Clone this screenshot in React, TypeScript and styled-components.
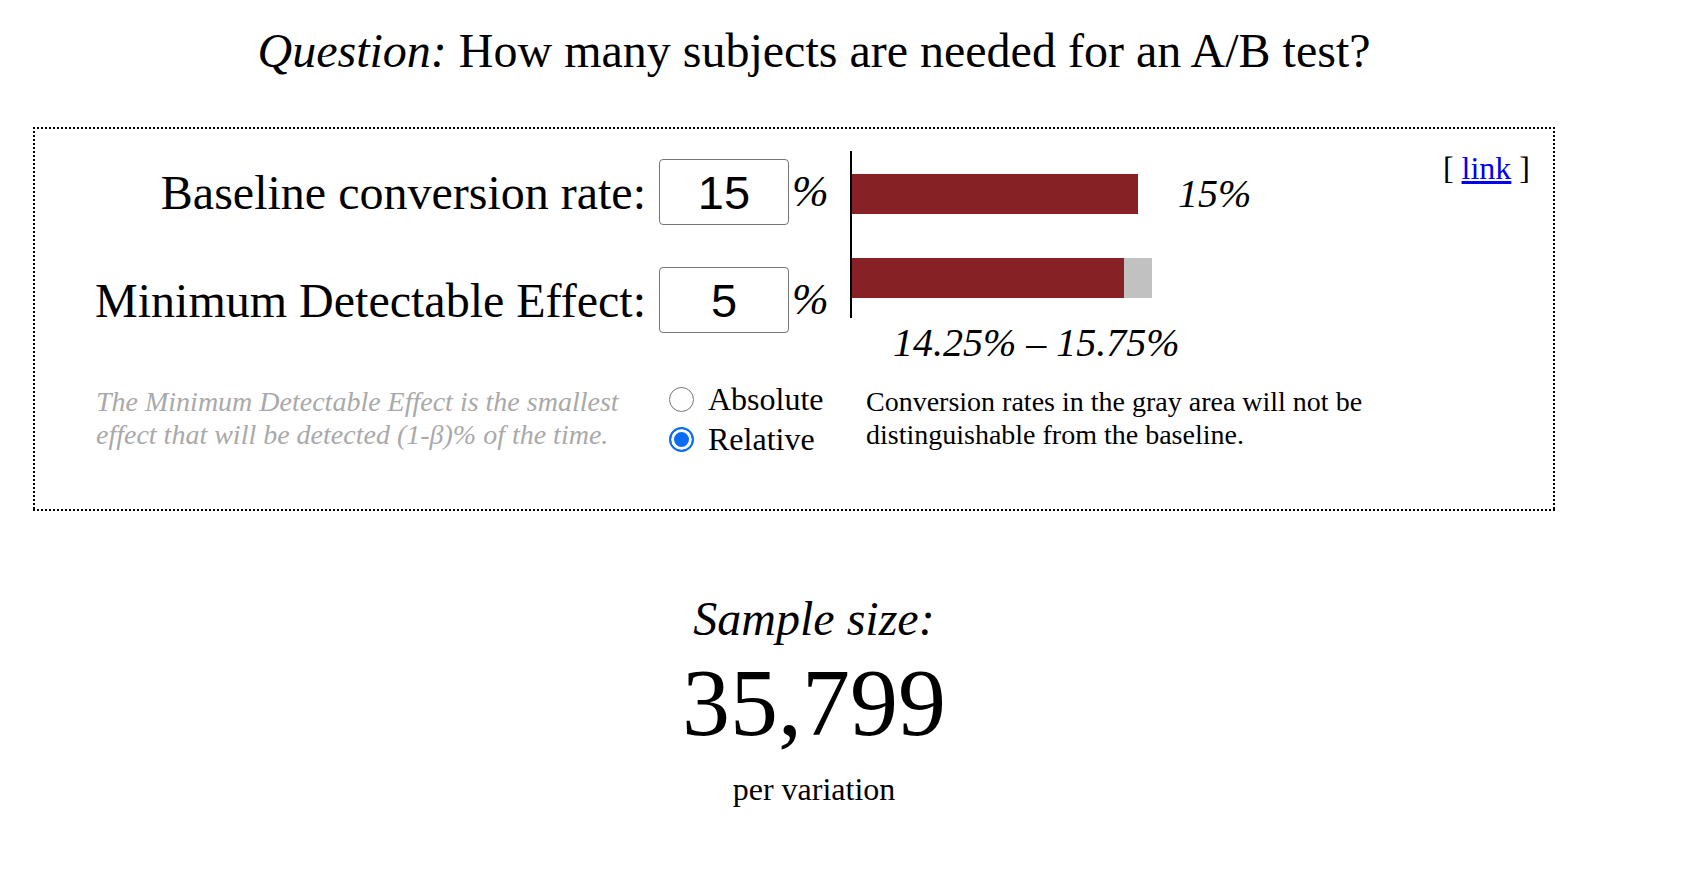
import React, { useState } from "react";
import styled, { createGlobalStyle } from "styled-components";

const GlobalStyle = createGlobalStyle`
  html, body { margin: 0; padding: 0; background: #fff; }
  body {
    font-family: "Liberation Serif", "Times New Roman", serif;
    color: #000;
  }
`;

const PX_PER_PCT = 19.2;

const Page = styled.main`
  width: 1562px;
  padding: 23px 0 0 33px;
`;

const Title = styled.h1`
  margin: 0;
  font-weight: normal;
  font-size: 48px;
  line-height: 55px;
  text-align: center;
`;

const Em = styled.em`
  font-style: italic;
`;

const Panel = styled.section`
  box-sizing: border-box;
  width: 1522px;
  margin-top: 49px;
  border: 2px solid transparent;
  background-origin: border-box;
  background-repeat: no-repeat;
  background-image:
    repeating-linear-gradient(to right, #000 0 2px, transparent 2px 4px),
    repeating-linear-gradient(to right, #000 0 2px, transparent 2px 4px),
    repeating-linear-gradient(to bottom, #000 0 2px, transparent 2px 4px),
    repeating-linear-gradient(to bottom, #000 0 2px, transparent 2px 4px);
  background-size: 100% 2px, 100% 2px, 2px 100%, 2px 100%;
  background-position: left top, left bottom, left top, right top;
  padding: 22px 23px 50px 0;
`;

const TopArea = styled.div`
  display: flex;
  align-items: flex-start;
`;

const InputGrid = styled.div`
  display: grid;
  grid-template-columns: 624px 130px 61px;
  grid-auto-rows: 66px;
  row-gap: 42px;
  align-items: center;
  padding-top: 8px;
`;

const FieldLabel = styled.label`
  font-size: 48px;
  line-height: 55px;
  text-align: right;
  padding-right: 13px;
  white-space: nowrap;
`;

const NumberInput = styled.input`
  box-sizing: border-box;
  width: 130px;
  height: 66px;
  border: 1px solid #767676;
  border-radius: 4px;
  font-family: "Liberation Sans", Arial, sans-serif;
  font-size: 47px;
  text-align: center;
  padding: 0;
  color: #000;
  background: #fff;
  outline: none;
`;

const Unit = styled.span`
  font-style: italic;
  font-size: 44px;
  line-height: 50px;
  padding-left: 3px;
`;

const Chart = styled.div`
  display: flex;
  flex-direction: column;
`;

const Axis = styled.div`
  box-sizing: border-box;
  height: 167px;
  border-left: 2px solid #000;
  padding: 23px 0 20px;
  display: flex;
  flex-direction: column;
  gap: 44px;
`;

const BarRow = styled.div`
  display: flex;
  align-items: center;
  gap: 40px;
  height: 40px;
`;

const Bar = styled.div`
  display: flex;
  height: 40px;
`;

const Segment = styled.div<{ $tone: "red" | "gray" }>`
  height: 40px;
  background: ${(p) => (p.$tone === "red" ? "#862226" : "#c1c1c1")};
`;

const BarValue = styled.span`
  font-style: italic;
  font-size: 40px;
  line-height: 46px;
  white-space: nowrap;
`;

const RangeText = styled.div`
  font-style: italic;
  font-size: 40px;
  line-height: 46px;
  margin: 2px 0 0 43px;
  white-space: nowrap;
`;

const LinkBox = styled.div`
  margin-left: auto;
  font-size: 32px;
  line-height: 34px;
  white-space: nowrap;
`;

const Anchor = styled.a`
  color: #0000ee;
  text-decoration: underline;
`;

const BottomArea = styled.div`
  display: grid;
  grid-template-columns: 634px 197px auto;
  align-items: start;
  margin-top: 11px;
`;

const Description = styled.p`
  margin: 0;
  padding: 8px 30px 0 61px;
  font-style: italic;
  font-size: 28px;
  line-height: 33px;
  color: #a9a9a9;
`;

const RadioGroup = styled.div`
  display: flex;
  flex-direction: column;
  padding-top: 2px;
`;

const RadioRow = styled.label`
  display: flex;
  align-items: center;
  gap: 14px;
  height: 40px;
  font-size: 32px;
  line-height: 36px;
`;

const RadioInput = styled.input`
  appearance: none;
  -webkit-appearance: none;
  box-sizing: border-box;
  width: 25px;
  height: 25px;
  margin: 0;
  border-radius: 50%;
  border: 1.5px solid #767676;
  background: #fff;
  &:checked {
    border: 2px solid #0b6cf5;
    background: #0b6cf5;
    box-shadow: inset 0 0 0 3px #fff;
  }
`;

const Note = styled.p`
  margin: 0;
  padding-top: 8px;
  max-width: 520px;
  font-size: 28px;
  line-height: 33px;
`;

const Result = styled.section`
  margin-top: 80px;
  text-align: center;
`;

const ResultLabel = styled.div`
  font-style: italic;
  font-size: 48px;
  line-height: 56px;
`;

const ResultNumber = styled.div`
  margin-top: 3px;
  font-size: 96px;
  line-height: 106px;
`;

const ResultUnit = styled.div`
  margin-top: 13px;
  font-size: 32px;
  line-height: 40px;
`;

export default function App() {
  const [baseline, setBaseline] = useState("15");
  const [mde, setMde] = useState("5");
  const [mode, setMode] = useState<"absolute" | "relative">("relative");

  const b = parseFloat(baseline) || 0;
  const m = parseFloat(mde) || 0;
  const delta = mode === "relative" ? (b * m) / 100 : m;
  const low = b - delta;
  const high = b + delta;
  const fmt = (v: number) => `${Number(v.toFixed(2))}%`;

  return (
    <>
      <GlobalStyle />
      <Page>
        <Title>
          <Em>Question:</Em> How many subjects are needed for an A/B test?
        </Title>
        <Panel>
          <TopArea>
            <InputGrid>
              <FieldLabel htmlFor="baseline">Baseline conversion rate:</FieldLabel>
              <NumberInput
                id="baseline"
                value={baseline}
                onChange={(e) => setBaseline(e.target.value)}
              />
              <Unit>%</Unit>
              <FieldLabel htmlFor="mde">Minimum Detectable Effect:</FieldLabel>
              <NumberInput id="mde" value={mde} onChange={(e) => setMde(e.target.value)} />
              <Unit>%</Unit>
            </InputGrid>
            <Chart>
              <Axis>
                <BarRow>
                  <Bar>
                    <Segment $tone="red" style={{ width: b * PX_PER_PCT - 2 }} />
                  </Bar>
                  <BarValue>{fmt(b)}</BarValue>
                </BarRow>
                <BarRow>
                  <Bar>
                    <Segment $tone="red" style={{ width: low * PX_PER_PCT - 2 }} />
                    <Segment $tone="gray" style={{ width: (high - low) * PX_PER_PCT }} />
                  </Bar>
                </BarRow>
              </Axis>
              <RangeText>
                {fmt(low)} – {fmt(high)}
              </RangeText>
            </Chart>
            <LinkBox>
              [ <Anchor href="#">link</Anchor> ]
            </LinkBox>
          </TopArea>
          <BottomArea>
            <Description>
              The Minimum Detectable Effect is the smallest effect that will be detected
              (1-β)% of the time.
            </Description>
            <RadioGroup>
              <RadioRow>
                <RadioInput
                  type="radio"
                  name="mode"
                  checked={mode === "absolute"}
                  onChange={() => setMode("absolute")}
                />
                Absolute
              </RadioRow>
              <RadioRow>
                <RadioInput
                  type="radio"
                  name="mode"
                  checked={mode === "relative"}
                  onChange={() => setMode("relative")}
                />
                Relative
              </RadioRow>
            </RadioGroup>
            <Note>
              Conversion rates in the gray area will not be distinguishable from the
              baseline.
            </Note>
          </BottomArea>
        </Panel>
        <Result>
          <ResultLabel>Sample size:</ResultLabel>
          <ResultNumber>35,799</ResultNumber>
          <ResultUnit>per variation</ResultUnit>
        </Result>
      </Page>
    </>
  );
}
